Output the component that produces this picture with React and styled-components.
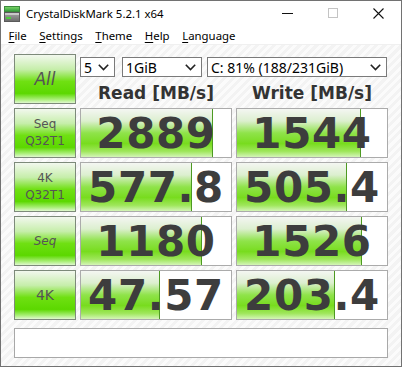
import styled, { createGlobalStyle } from "styled-components";

const GlobalStyle = createGlobalStyle`
  html, body { margin: 0; padding: 0; background: #fff; }
  * { box-sizing: border-box; }
`;

const rows = [
  { label: ["Seq", "Q32T1"], read: "2889", readFill: 132, write: "1544", writeFill: 124 },
  { label: ["4K", "Q32T1"], read: "577.8", readFill: 111, write: "505.4", writeFill: 110 },
  { label: ["Seq"], italic: true, read: "1180", readFill: 121, write: "1526", writeFill: 125 },
  { label: ["4K"], big: true, read: "47.57", readFill: 79, write: "203.4", writeFill: 98 },
];

const DriveIcon = () => (
  <svg width="16" height="16" viewBox="0 0 16 16">
    <defs>
      <linearGradient id="g1" x1="0" y1="0" x2="0" y2="1">
        <stop offset="0" stopColor="#7fd86a" />
        <stop offset="1" stopColor="#2f9a3a" />
      </linearGradient>
      <linearGradient id="g2" x1="0" y1="0" x2="0" y2="1">
        <stop offset="0" stopColor="#a8a8a8" />
        <stop offset="1" stopColor="#6a6a6a" />
      </linearGradient>
    </defs>
    <rect x="0.5" y="0.5" width="15" height="5" fill="url(#g1)" stroke="#3c8a3c" />
    <rect x="0.5" y="6.5" width="15" height="9" fill="url(#g2)" stroke="#5a5a5a" />
    <rect x="1" y="7" width="14" height="2" fill="#c8c8c8" />
    <rect x="2" y="11" width="5" height="2" fill="#4ccf3c" />
  </svg>
);

const Chevron = () => (
  <svg width="11" height="7" viewBox="0 0 11 7">
    <polyline points="0.8,0.8 5.5,5.5 10.2,0.8" fill="none" stroke="#222" strokeWidth="1.6" />
  </svg>
);

export default function App() {
  return (
    <>
      <GlobalStyle />
      <Window>
        <TitleBar>
          <DriveIcon />
          <Title>CrystalDiskMark 5.2.1 x64</Title>
          <Controls>
            <CtrlBtn>
              <svg width="11" height="1"><rect width="11" height="1" fill="#111" /></svg>
            </CtrlBtn>
            <CtrlBtn>
              <svg width="10" height="10"><rect x="0.5" y="0.5" width="9" height="9" fill="none" stroke="#c4c4c4" /></svg>
            </CtrlBtn>
            <CtrlBtn>
              <svg width="11" height="11">
                <path d="M0.5 0.5 L10.5 10.5 M10.5 0.5 L0.5 10.5" stroke="#111" strokeWidth="1.1" />
              </svg>
            </CtrlBtn>
          </Controls>
        </TitleBar>
        <MenuBar>
          <MenuItem><u>F</u>ile</MenuItem>
          <MenuItem><u>S</u>ettings</MenuItem>
          <MenuItem><u>T</u>heme</MenuItem>
          <MenuItem><u>H</u>elp</MenuItem>
          <MenuItem><u>L</u>anguage</MenuItem>
        </MenuBar>
        <Client>
          <Grid>
            <TestButton $italic $size={17}>All</TestButton>
            <TopArea>
              <Selects>
                <Select $w={35}><span>5</span><Chevron /></Select>
                <Select $w={80}><span>1GiB</span><Chevron /></Select>
                <Select $w={180}><span>C: 81% (188/231GiB)</span><Chevron /></Select>
              </Selects>
              <Headers>
                <Header>Read [MB/s]</Header>
                <Header>Write [MB/s]</Header>
              </Headers>
            </TopArea>
            {rows.map((r) => (
              <Row key={r.label.join() + r.read}>
                <TestButton $italic={r.italic} $size={r.big ? 14 : 12}>
                  {r.label.map((l) => <div key={l}>{l}</div>)}
                </TestButton>
                <Cell>
                  <Fill style={{ width: r.readFill }} />
                  <Value>{r.read}</Value>
                </Cell>
                <Cell>
                  <Fill style={{ width: r.writeFill }} />
                  <Value>{r.write}</Value>
                </Cell>
              </Row>
            ))}
          </Grid>
          <Comment />
        </Client>
      </Window>
    </>
  );
}

const Window = styled.div`
  width: 402px;
  height: 367px;
  border: 1px solid #727272;
  display: flex;
  flex-direction: column;
  background: #fff;
  overflow: hidden;
`;

const TitleBar = styled.div`
  height: 25px;
  display: flex;
  align-items: center;
  padding-left: 3px;
  svg { flex: none; }
`;

const Title = styled.div`
  font-family: "Noto Sans", "Open Sans", sans-serif;
  font-size: 11.4px;
  color: #000;
  margin-left: 6px;
  margin-top: -1px;
`;

const Controls = styled.div`
  margin-left: auto;
  display: flex;
  height: 100%;
`;

const CtrlBtn = styled.div`
  width: 45px;
  height: 100%;
  display: flex;
  align-items: center;
  justify-content: center;
  padding-bottom: 1px;
  &:last-child { width: 46px; }
`;

const MenuBar = styled.div`
  height: 19px;
  display: flex;
  align-items: center;
  padding-left: 1px;
  border-bottom: 1px solid #f0f0f0;
  font-family: "Noto Sans", "Open Sans", sans-serif;
  font-size: 11.4px;
  color: #000;
`;

const MenuItem = styled.div`
  padding: 0 6.3px;
  &:first-child { padding-left: 6.5px; }
  u { text-decoration-thickness: 1px; text-underline-offset: 2px; }
`;

const Client = styled.div`
  flex: 1;
  padding: 9px 13px 0;
  background: repeating-linear-gradient(
    135deg,
    #f3f3f3 0px,
    #f3f3f3 3px,
    #fbfbfb 3px,
    #fbfbfb 6px
  );
`;

const Grid = styled.div`
  display: grid;
  grid-template-columns: 62px 152px 152px;
  grid-auto-rows: 50px;
  column-gap: 4px;
  row-gap: 4px;
`;

const Row = styled.div`
  display: contents;
`;

const TopArea = styled.div`
  grid-column: 2 / 4;
  display: flex;
  flex-direction: column;
`;

const Selects = styled.div`
  display: flex;
  margin-top: 3px;
  gap: 7px;
  & > :last-child { margin-left: -2px; }
`;

const Select = styled.div`
  width: ${(p) => p.$w}px;
  height: 20px;
  background: #fff;
  border: 1px solid #7a7a7a;
  display: flex;
  align-items: center;
  justify-content: space-between;
  padding: 0 5px 0 3px;
  font-family: "Noto Sans", "Open Sans", sans-serif;
  font-size: 14px;
  color: #000;
`;

const Headers = styled.div`
  display: grid;
  grid-template-columns: 152px 152px;
  column-gap: 4px;
  margin-top: 6px;
`;

const Header = styled.div`
  text-align: center;
  font-family: "DejaVu Sans", sans-serif;
  font-weight: bold;
  font-size: 17px;
  color: #333;
  line-height: 20px;
`;

const TestButton = styled.div`
  border: 1px solid #7d8a7a;
  background: linear-gradient(
    to bottom,
    #f2f8ee 0%,
    #c6eeaa 30%,
    #6fe012 55%,
    #5cd800 80%,
    #a6ee72 92%,
    #e0f8d0 100%
  );
  display: flex;
  flex-direction: column;
  align-items: center;
  justify-content: center;
  font-family: "DejaVu Sans", sans-serif;
  font-size: ${(p) => p.$size}px;
  font-style: ${(p) => (p.$italic ? "italic" : "normal")};
  color: #555;
  line-height: 17px;
`;

const Cell = styled.div`
  position: relative;
  border: 1px solid #ababab;
  background: #fff;
  overflow: hidden;
  display: flex;
  align-items: center;
  justify-content: center;
`;

const Fill = styled.div`
  position: absolute;
  left: 0;
  top: 0;
  bottom: 0;
  border-right: 1px solid #4d9a22;
  background: linear-gradient(
    to bottom,
    #f4f6f2 0%,
    #dcefcf 25%,
    #8fe34a 50%,
    #78dc1e 72%,
    #9ee65a 88%,
    #d4f5b8 100%
  );
`;

const Value = styled.div`
  position: relative;
  font-family: "DejaVu Sans", sans-serif;
  font-weight: bold;
  font-size: 42px;
  letter-spacing: 0.6px;
  color: #3d3d3d;
  white-space: nowrap;
  line-height: 1;
  margin-top: 1px;
`;

const Comment = styled.div`
  margin-top: 8px;
  width: 374px;
  height: 30px;
  border: 1px solid #a8a8a8;
  background: #fff;
`;
